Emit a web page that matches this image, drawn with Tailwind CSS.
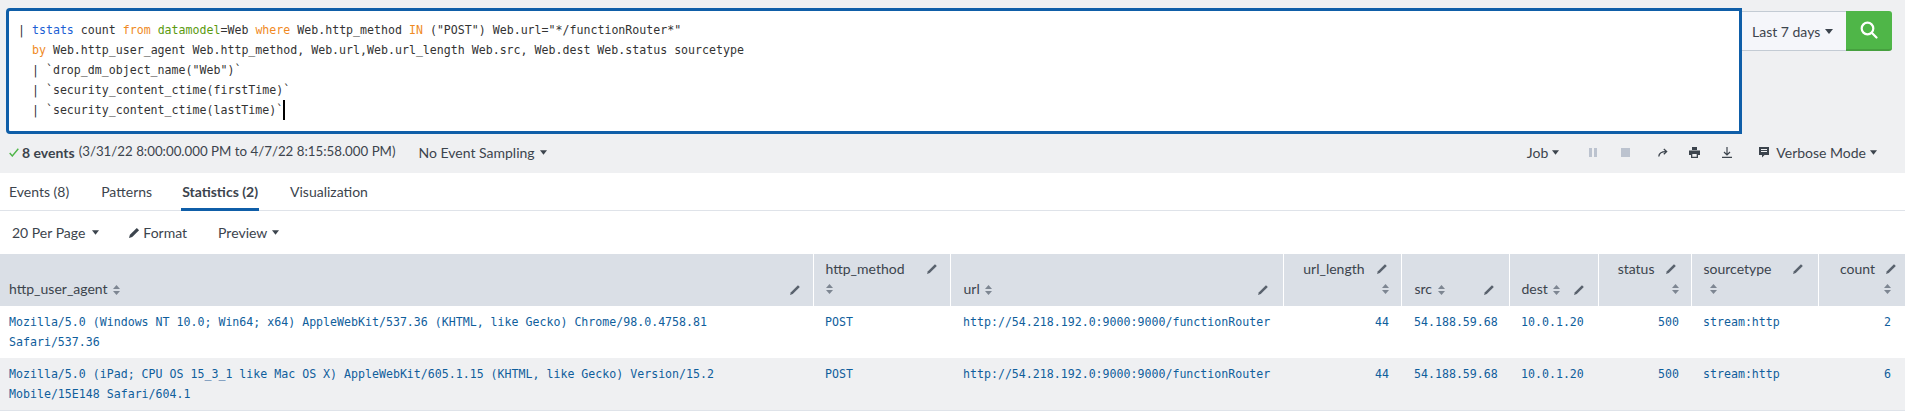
<!DOCTYPE html>
<html lang="en">
<head>
    <meta charset="UTF-8">
    <title>Search</title>
    <script src="https://cdn.jsdelivr.net/npm/@tailwindcss/browser@4"></script>
</head>
<body class="w-[1905px] h-[415px] overflow-hidden bg-white font-['Lato','Open_Sans',sans-serif] text-[14px] text-[#3c444d]">
    <!-- search bar -->
    <div class="bg-[#eff0f2] h-[173px]">
        <div class="flex items-start pt-[8px] pl-[6px]">
            <div class="w-[1736px] h-[126px] bg-white border-[3px] border-[#0f5ea8] rounded-l-[4px] pl-[9px] pt-[9px] font-['DejaVu_Sans_Mono',monospace] text-[11.6px] leading-[20px] text-[#333]">
                <div class="whitespace-pre">| <span class="text-[#1c5fd4]">tstats</span> count <span class="text-[#f08a24]">from</span> <span class="text-[#5c9a0f]">datamodel</span>=Web <span class="text-[#f08a24]">where</span> Web.http_method <span class="text-[#f08a24]">IN</span> ("POST") Web.url="*/functionRouter*"</div>
                <div class="whitespace-pre">  <span class="text-[#f08a24]">by</span> Web.http_user_agent Web.http_method, Web.url,Web.url_length Web.src, Web.dest Web.status sourcetype</div>
                <div class="whitespace-pre">  | `drop_dm_object_name("Web")`</div>
                <div class="whitespace-pre">  | `security_content_ctime(firstTime)`</div>
                <div class="whitespace-pre">  | `security_content_ctime(lastTime)`<span class="inline-block w-[2px] h-[20px] bg-black align-top"></span></div>
            </div>
            <div class="mt-[3px] w-[104px] h-[40px] bg-[#f5f6fa] border-y border-[#c3cbd4] flex items-center pl-[10px] gap-[5px] text-[14px]">
                Last 7 days
                <svg width="8" height="5" viewBox="0 0 8 5" class="fill-[#3c444d]"><path d="M0 0h8L4 5z"/></svg>
            </div>
            <div class="mt-[3px] w-[46px] h-[40px] bg-[#4fb648] border-b-2 border-[#46a03f] rounded-r-[3px] flex items-center justify-center">
                <svg width="18" height="18" viewBox="0 0 18 18" fill="none" stroke="white" stroke-width="2.2" stroke-linecap="round"><circle cx="7.5" cy="7.5" r="5.8"/><path d="M12 12l4.5 4.5"/></svg>
            </div>
        </div>
        <!-- job status -->
        <div class="flex items-center h-[39px] pb-[3px] pl-[9px] pr-[28px]">
            <svg width="10" height="9" viewBox="0 0 10 9" fill="none" stroke="#4fb648" stroke-width="1.4"><path d="M.7 5l2.6 3L9.3.7"/></svg>
            <span class="ml-[3px] font-bold">8 events</span>
            <span class="ml-[4px] text-[13.3px]">(3/31/22 8:00:00.000 PM to 4/7/22 8:15:58.000 PM)</span>
            <span class="ml-[23px] flex items-center gap-[5px]">No Event Sampling
                <svg width="7" height="5" viewBox="0 0 8 5" class="fill-[#3c444d]"><path d="M0 0h8L4 5z"/></svg>
            </span>
            <div class="ml-auto flex items-center">
                <span class="flex items-center gap-[4px]">Job
                    <svg width="7" height="5" viewBox="0 0 8 5" class="fill-[#3c444d]"><path d="M0 0h8L4 5z"/></svg>
                </span>
                <svg class="ml-[30px]" width="8" height="9" viewBox="0 0 8 9" fill="#bcc3cf"><path d="M0 0h3v9H0zM5 0h3v9H5z"/></svg>
                <svg class="ml-[24px]" width="9" height="9" viewBox="0 0 9 9" fill="#bcc3cf"><path d="M0 0h9v9H0z"/></svg>
                <svg class="ml-[28px]" width="10" height="9" viewBox="0 0 10 9" fill="none" stroke="#3c444d" stroke-width="1.3"><path d="M.8 8.5C1 5 3.5 3.6 8 3.6"/><path d="M5.8 1l2.8 2.6-2.8 2.6"/></svg>
                <svg class="ml-[21px]" width="11" height="11" viewBox="0 0 11 11" fill="#3c444d"><path d="M3 0h5v3H3zM0 3.5h11V8H9v3H2V8H0zM3.3 7v2.8h4.4V7z"/></svg>
                <svg class="ml-[22px]" width="10" height="11" viewBox="0 0 10 11" fill="none" stroke="#3c444d" stroke-width="1.2"><path d="M5 0v7.5M2 5l3 3 3-3M0 10.4h10"/></svg>
                <svg class="ml-[27px]" width="10" height="11" viewBox="0 0 10 11" fill="#3c444d"><path d="M0 0h10v8H5.5L3 10.5V8H0zM2 2v.9h6V2zM2 4v.9h6V4z" fill-rule="evenodd"/></svg>
                <span class="ml-[7px] flex items-center gap-[4px]">Verbose Mode
                    <svg width="7" height="5" viewBox="0 0 8 5" class="fill-[#3c444d]"><path d="M0 0h8L4 5z"/></svg>
                </span>
            </div>
        </div>
    </div>

    <!-- tabs -->
    <div class="flex h-[38px] pl-[9px] border-b border-[#dfe3e9]">
        <span class="leading-[37px] mr-[32px]">Events (8)</span>
        <span class="leading-[37px] mr-[30px]">Patterns</span>
        <span class="leading-[37px] mr-[30px] font-bold border-b-[3px] border-[#0f5ea8] h-[38px] px-px -mx-px">Statistics (2)</span>
        <span class="leading-[37px] ml-px">Visualization</span>
    </div>

    <!-- table toolbar -->
    <div class="flex items-center h-[43px] pl-[12px]">
        <span class="flex items-center gap-[7px]">20 Per Page
            <svg width="7" height="5" viewBox="0 0 8 5" class="fill-[#3c444d]"><path d="M0 0h8L4 5z"/></svg>
        </span>
        <span class="ml-[30px] flex items-center gap-[3px]">
            <svg width="11" height="11" viewBox="0 0 12 12" fill="#3c444d"><path d="M0 12l1-3.5 7.5-7.5 2.5 2.5L3.5 11z"/></svg>
            Format
        </span>
        <span class="ml-[31px] flex items-center gap-[5px]">Preview
            <svg width="7" height="5" viewBox="0 0 8 5" class="fill-[#3c444d]"><path d="M0 0h8L4 5z"/></svg>
        </span>
    </div>

    <!-- results -->
    <table class="table-fixed w-[1905px] border-collapse">
        <colgroup>
            <col class="w-[813px]"><col class="w-[137px]"><col class="w-[333px]"><col class="w-[118px]"><col class="w-[108px]"><col class="w-[89px]"><col class="w-[93px]"><col class="w-[127px]"><col class="w-[87px]">
        </colgroup>
        <thead>
            <tr class="h-[52px] bg-[#dadfe6] text-[14px] leading-[20px] font-normal">
                <th class="relative font-normal align-bottom text-left pl-[9px] pb-[7px]">http_user_agent
                    <svg class="inline-block align-[-1px] ml-[2px]" width="7" height="10" viewBox="0 0 7 10" fill="#7d8692"><path d="M3.5 0L7 4H0zM3.5 10L0 6h7z"/></svg>
                    <svg class="absolute right-[12px] bottom-[11px]" width="11" height="11" viewBox="0 0 12 12" fill="#59626d"><path d="M0 12l1-3 7.7-7.7 2 2L3 11z"/></svg>
                </th>
                <th class="relative font-normal align-bottom text-left pl-[12px] pb-[7px] border-l border-white">http_method
                    <div class="h-[20px] flex items-center"><svg width="7" height="10" viewBox="0 0 7 10" fill="#7d8692"><path d="M3.5 0L7 4H0zM3.5 10L0 6h7z"/></svg></div>
                    <svg class="absolute right-[12px] top-[9px]" width="11" height="11" viewBox="0 0 12 12" fill="#59626d"><path d="M0 12l1-3 7.7-7.7 2 2L3 11z"/></svg>
                </th>
                <th class="relative font-normal align-bottom text-left pl-[13px] pb-[7px] border-l border-white">url
                    <svg class="inline-block align-[-1px] ml-[2px]" width="7" height="10" viewBox="0 0 7 10" fill="#7d8692"><path d="M3.5 0L7 4H0zM3.5 10L0 6h7z"/></svg>
                    <svg class="absolute right-[14px] bottom-[11px]" width="11" height="11" viewBox="0 0 12 12" fill="#59626d"><path d="M0 12l1-3 7.7-7.7 2 2L3 11z"/></svg>
                </th>
                <th class="relative font-normal align-bottom text-right pr-[12px] pb-[7px] border-l border-white"><span class="mr-[24px]">url_length</span>
                    <div class="h-[20px] flex items-center justify-end"><svg width="7" height="10" viewBox="0 0 7 10" fill="#7d8692"><path d="M3.5 0L7 4H0zM3.5 10L0 6h7z"/></svg></div>
                    <svg class="absolute right-[13px] top-[9px]" width="11" height="11" viewBox="0 0 12 12" fill="#59626d"><path d="M0 12l1-3 7.7-7.7 2 2L3 11z"/></svg>
                </th>
                <th class="relative font-normal align-bottom text-left pl-[13px] pb-[7px] border-l border-white">src
                    <svg class="inline-block align-[-1px] ml-[2px]" width="7" height="10" viewBox="0 0 7 10" fill="#7d8692"><path d="M3.5 0L7 4H0zM3.5 10L0 6h7z"/></svg>
                    <svg class="absolute right-[14px] bottom-[11px]" width="11" height="11" viewBox="0 0 12 12" fill="#59626d"><path d="M0 12l1-3 7.7-7.7 2 2L3 11z"/></svg>
                </th>
                <th class="relative font-normal align-bottom text-left pl-[12px] pb-[7px] border-l border-white">dest
                    <svg class="inline-block align-[-1px] ml-[2px]" width="7" height="10" viewBox="0 0 7 10" fill="#7d8692"><path d="M3.5 0L7 4H0zM3.5 10L0 6h7z"/></svg>
                    <svg class="absolute right-[13px] bottom-[11px]" width="11" height="11" viewBox="0 0 12 12" fill="#59626d"><path d="M0 12l1-3 7.7-7.7 2 2L3 11z"/></svg>
                </th>
                <th class="relative font-normal align-bottom text-right pr-[12px] pb-[7px] border-l border-white"><span class="mr-[24px]">status</span>
                    <div class="h-[20px] flex items-center justify-end"><svg width="7" height="10" viewBox="0 0 7 10" fill="#7d8692"><path d="M3.5 0L7 4H0zM3.5 10L0 6h7z"/></svg></div>
                    <svg class="absolute right-[14px] top-[9px]" width="11" height="11" viewBox="0 0 12 12" fill="#59626d"><path d="M0 12l1-3 7.7-7.7 2 2L3 11z"/></svg>
                </th>
                <th class="relative font-normal align-bottom text-left pl-[12px] pb-[7px] border-l border-white">sourcetype
                    <div class="h-[20px] flex items-center"><svg class="ml-[6px]" width="7" height="10" viewBox="0 0 7 10" fill="#7d8692"><path d="M3.5 0L7 4H0zM3.5 10L0 6h7z"/></svg></div>
                    <svg class="absolute right-[14px] top-[9px]" width="11" height="11" viewBox="0 0 12 12" fill="#59626d"><path d="M0 12l1-3 7.7-7.7 2 2L3 11z"/></svg>
                </th>
                <th class="relative font-normal align-bottom text-right pr-[14px] pb-[7px] border-l border-white"><span class="mr-[16px]">count</span>
                    <div class="h-[20px] flex items-center justify-end"><svg width="7" height="10" viewBox="0 0 7 10" fill="#7d8692"><path d="M3.5 0L7 4H0zM3.5 10L0 6h7z"/></svg></div>
                    <svg class="absolute right-[8px] top-[9px]" width="11" height="11" viewBox="0 0 12 12" fill="#59626d"><path d="M0 12l1-3 7.7-7.7 2 2L3 11z"/></svg>
                </th>
            </tr>
        </thead>
        <tbody class="font-['DejaVu_Sans_Mono',monospace] text-[11.6px] leading-[20px] text-[#0f5e9c]">
            <tr class="h-[52px]">
                <td class="align-top pt-[6px] pl-[9px] pr-[60px]">Mozilla/5.0 (Windows NT 10.0; Win64; x64) AppleWebKit/537.36 (KHTML, like Gecko) Chrome/98.0.4758.81 Safari/537.36</td>
                <td class="align-top pt-[6px] pl-[12px]">POST</td>
                <td class="align-top pt-[6px] pl-[13px]">http://54.218.192.0:9000:9000/functionRouter</td>
                <td class="align-top pt-[6px] pr-[12px] text-right">44</td>
                <td class="align-top pt-[6px] pl-[13px]">54.188.59.68</td>
                <td class="align-top pt-[6px] pl-[12px]">10.0.1.20</td>
                <td class="align-top pt-[6px] pr-[12px] text-right">500</td>
                <td class="align-top pt-[6px] pl-[12px]">stream:http</td>
                <td class="align-top pt-[6px] pr-[14px] text-right">2</td>
            </tr>
            <tr class="h-[52px] bg-[#eff0f2] border-b border-[#dfe3e9]">
                <td class="align-top pt-[6px] pl-[9px] pr-[60px]">Mozilla/5.0 (iPad; CPU OS 15_3_1 like Mac OS X) AppleWebKit/605.1.15 (KHTML, like Gecko) Version/15.2 Mobile/15E148 Safari/604.1</td>
                <td class="align-top pt-[6px] pl-[12px]">POST</td>
                <td class="align-top pt-[6px] pl-[13px]">http://54.218.192.0:9000:9000/functionRouter</td>
                <td class="align-top pt-[6px] pr-[12px] text-right">44</td>
                <td class="align-top pt-[6px] pl-[13px]">54.188.59.68</td>
                <td class="align-top pt-[6px] pl-[12px]">10.0.1.20</td>
                <td class="align-top pt-[6px] pr-[12px] text-right">500</td>
                <td class="align-top pt-[6px] pl-[12px]">stream:http</td>
                <td class="align-top pt-[6px] pr-[14px] text-right">6</td>
            </tr>
        </tbody>
    </table>
</body>
</html>
